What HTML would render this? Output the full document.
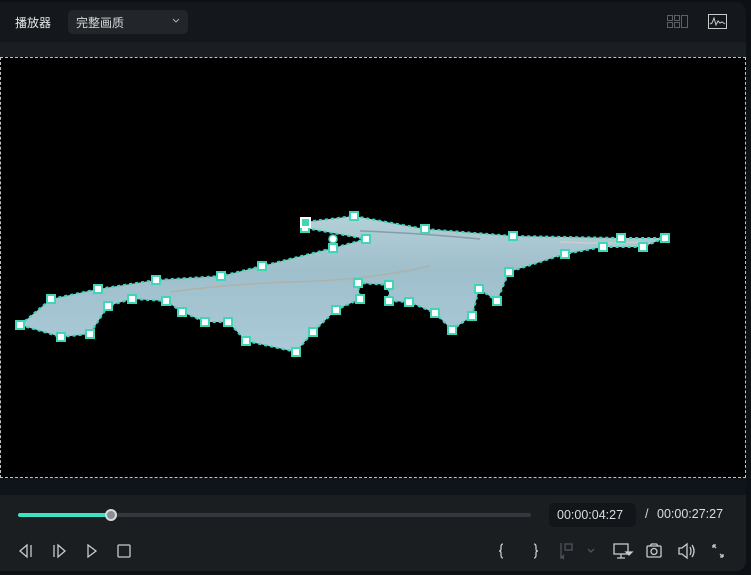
<!DOCTYPE html>
<html><head><meta charset="utf-8"><style>
*{margin:0;padding:0;box-sizing:border-box}
body{width:751px;height:575px;background:#0d1116;overflow:hidden;position:relative;font-family:"Liberation Sans","Noto Sans CJK SC",sans-serif;color:#d8dadc}
.hdr{position:absolute;left:0;top:2px;width:746px;height:40px;background:#14181c;border-radius:0 10px 0 0}
.strip{position:absolute;left:0;top:42px;width:746px;height:15px;background:#1a1d21}
.vid{position:absolute;left:0;top:57px;width:746px;height:421px;background:#000;border:1px dashed #bfc3c6}
.below{position:absolute;left:0;top:478px;width:746px;height:17px;background:#0e1419}
.bot{position:absolute;left:0;top:495px;width:746px;height:76px;background:#1b1e21;border-radius:0 0 10px 0}
.t{position:absolute;font-size:12px;white-space:nowrap}
</style></head><body>
<div class="hdr"></div>
<div class="t" style="left:15px;top:14px;font-size:12px;color:#e8e8e8">播放器</div>
<div style="position:absolute;left:68px;top:10px;width:120px;height:24px;background:#22262b;border-radius:5px"></div>
<div class="t" style="left:76px;top:14px;color:#d8d8d8">完整画质</div>
<svg style="position:absolute;left:172px;top:18px" width="8" height="6"><path d="M1 1l3 3 3-3" stroke="#aaa" fill="none"/></svg>
<svg style="position:absolute;left:667px;top:15px" width="22" height="14" fill="none" stroke="#5b6066"><rect x="0.5" y="0.5" width="5" height="5"/><rect x="7.5" y="0.5" width="5" height="5"/><rect x="0.5" y="7.5" width="5" height="5"/><rect x="7.5" y="7.5" width="5" height="5"/><rect x="14.5" y="0.5" width="6" height="12"/></svg>
<svg style="position:absolute;left:708px;top:14px" width="20" height="16" fill="none" stroke="#c8cacc"><rect x="0.5" y="0.5" width="18" height="14"/><path d="M2 10l2-1 2-5 2 7 2-4 2 2 2-1 3 2"/></svg>
<div class="strip"></div>
<div class="vid"></div>
<svg style="position:absolute;left:0;top:0" width="751" height="478">
<defs><linearGradient id="g" x1="0" y1="0" x2="0" y2="1"><stop offset="0" stop-color="#b4d0d8"/><stop offset="0.4" stop-color="#9fbfcc"/><stop offset="1" stop-color="#a9cad6"/></linearGradient></defs>
<polygon fill="url(#g)" stroke="#3fd6b8" stroke-width="2" stroke-dasharray="3 3" points="20,325 51,299 98,289 156,280 221,276 262,266 333,248 366,239 305,228 305,222 354,216 425,229 513,236 621,238 665,238 643,247 603,247 565,254 509,272 497,301 479,289 472,316 452,330 435,313 409,302 389,301 389,285 358,283 360,299 336,310 313,332 296,352 246,341 228,322 205,322 182,312 166,301 132,299 108,306 90,334 61,337"/>
<g fill="none" stroke-width="1.5" opacity="0.6"><path d="M170 292q60-8 120-10q80-2 140-16" stroke="#b8a98e"/><path d="M360 231q60 2 120 8" stroke="#6d7f88"/><path d="M560 242q40 2 80 0" stroke="#d9d4c4"/></g>
<g fill="#fff" stroke="#3fd6b8" stroke-width="2">
<rect x="16" y="321" width="8" height="8"/><rect x="47" y="295" width="8" height="8"/><rect x="94" y="285" width="8" height="8"/><rect x="152" y="276" width="8" height="8"/><rect x="217" y="272" width="8" height="8"/><rect x="258" y="262" width="8" height="8"/><rect x="329" y="244" width="8" height="8"/><rect x="362" y="235" width="8" height="8"/><rect x="301" y="224" width="8" height="8"/><rect x="350" y="212" width="8" height="8"/><rect x="421" y="225" width="8" height="8"/><rect x="509" y="232" width="8" height="8"/><rect x="617" y="234" width="8" height="8"/><rect x="661" y="234" width="8" height="8"/><rect x="639" y="243" width="8" height="8"/><rect x="599" y="243" width="8" height="8"/><rect x="561" y="250" width="8" height="8"/><rect x="505" y="268" width="8" height="8"/><rect x="493" y="297" width="8" height="8"/><rect x="475" y="285" width="8" height="8"/><rect x="468" y="312" width="8" height="8"/><rect x="448" y="326" width="8" height="8"/><rect x="431" y="309" width="8" height="8"/><rect x="405" y="298" width="8" height="8"/><rect x="385" y="297" width="8" height="8"/><rect x="385" y="281" width="8" height="8"/><rect x="354" y="279" width="8" height="8"/><rect x="356" y="295" width="8" height="8"/><rect x="332" y="306" width="8" height="8"/><rect x="309" y="328" width="8" height="8"/><rect x="292" y="348" width="8" height="8"/><rect x="242" y="337" width="8" height="8"/><rect x="224" y="318" width="8" height="8"/><rect x="201" y="318" width="8" height="8"/><rect x="178" y="308" width="8" height="8"/><rect x="162" y="297" width="8" height="8"/><rect x="128" y="295" width="8" height="8"/><rect x="104" y="302" width="8" height="8"/><rect x="86" y="330" width="8" height="8"/><rect x="57" y="333" width="8" height="8"/>
</g>
<rect x="301" y="218" width="9" height="9" fill="#3fd6b8" stroke="#fff" stroke-width="2"/>
<circle cx="333" cy="239" r="4" fill="#fff" stroke="#3fd6b8" stroke-width="1.5"/>
</svg>
<div class="below"></div>
<div class="bot"></div>
<div style="position:absolute;left:18px;top:513px;width:513px;height:4px;background:#34383e;border-radius:2px"></div>
<div style="position:absolute;left:18px;top:513px;width:94px;height:4px;background:#3fe0c4;border-radius:2px"></div>
<div style="position:absolute;left:105px;top:509px;width:12px;height:12px;background:#8b8f94;border:2px solid #d8dadc;border-radius:50%"></div>
<div style="position:absolute;left:549px;top:503px;width:87px;height:24px;background:#121519;border-radius:5px"></div>
<div class="t" style="left:557px;top:508px;color:#dcdcdc;font-size:12.5px">00:00:04:27</div>
<div class="t" style="left:645px;top:507px;color:#dcdcdc;font-size:12.5px">/</div>
<div class="t" style="left:657px;top:507px;color:#dcdcdc;font-size:12.5px">00:00:27:27</div>
<svg style="position:absolute;left:0;top:538px" width="751" height="26" fill="none" stroke="#c8cacc" stroke-width="1.3">
<path d="M27 7l-7 6 7 6z M31 7v12"/>
<path d="M54 7v12 M58 7l7 6-7 6z"/>
<path d="M88 7l8 6-8 6z"/>
<rect x="118" y="7" width="12" height="12" rx="1"/>
<path d="M503 6q-2 0-2 3v2q0 2-2 2q2 0 2 2v2q0 3 2 3"/>
<path d="M534 6q2 0 2 3v2q0 2 2 2q-2 0-2 2v2q0 3-2 3" />
<g stroke="#4f5459"><path d="M561 5v16 M561 19h3 M564 17l-2 2 2 2"/><rect x="565" y="6" width="7" height="6"/><path d="M588 11l3 3 3-3"/></g>
<rect x="614" y="6" width="14" height="10"/><path d="M621 16v4 M617 20h8"/><path d="M626 14h6l-3 3z" fill="#c8cacc"/>
<rect x="647" y="8" width="14" height="11" rx="1"/><circle cx="654" cy="13.5" r="3"/><path d="M650 8l1.5-2h5l1.5 2"/>
<path d="M679 10h3l5-4v14l-5-4h-3z M690 9q2 4 0 8 M692 7q4 6 0 12"/>
<path d="M713 7l3 3 M713 7v3 M713 7h3 M723 19l-3-3 M723 19v-3 M723 19h-3"/>
</svg>
</body></html>
